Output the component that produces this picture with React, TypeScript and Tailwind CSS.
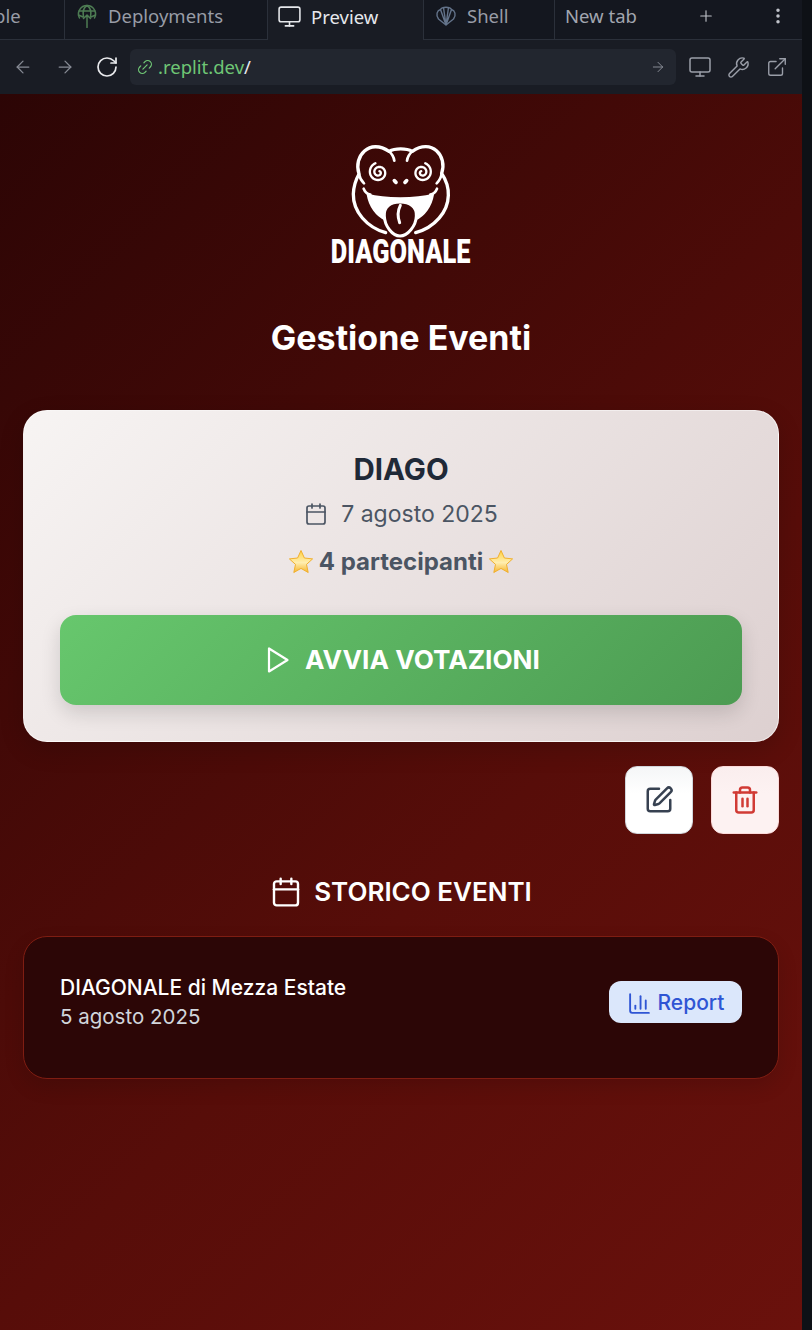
import React from "react";
import { ArrowLeft, ArrowRight, RotateCw, Link2, Monitor, Wrench, ExternalLink, Plus, EllipsisVertical, Calendar, SquarePen, Trash2, ChartColumn } from "lucide-react";

function spiral(cx: number, cy: number, dir: number) {
  const pts: string[] = [];
  for (let i = 0; i <= 60; i++) {
    const t = i / 60;
    const a = -Math.PI / 2 + dir * (0.6 + t * 1.85 * 2 * Math.PI);
    const r = 4 + t * 25;
    pts.push(`${(cx + r * Math.cos(a)).toFixed(1)} ${(cy + r * Math.sin(a)).toFixed(1)}`);
  }
  return "M" + pts.join(" L");
}

function Globe() {
  return (
    <svg width="20" height="24" viewBox="0 0 20 24" fill="none" stroke="#4d7c53" strokeWidth="1.5" strokeLinecap="round">
      <path d="M2.500 14 A8.500 8.500 0 1 1 17.500 14" />
      <path d="M10 1.500 C6 4 5.500 8 6.500 13 M10 1.500 C14 4 14.500 8 13.500 13 M2 7 H18 M1.500 11 L6 13 M18.500 11 L14 13" />
      <path d="M10 23.500 V11 M6.500 14.500 L10 11 L13.500 14.500" />
    </svg>
  );
}

function ShellIcon() {
  return (
    <svg width="22" height="22" viewBox="0 0 22 22" fill="none" stroke="#64748b" strokeWidth="1.4" strokeLinejoin="round">
      <path d="M11 20 L3.500 14 C0.500 10 2 5.500 5.500 4.500 C7 1.500 15 1.500 16.500 4.500 C20 5.500 21.500 10 18.500 14 Z" />
      <path d="M11 20 L5.500 4.500 M11 20 L8.500 2.500 M11 20 L13.500 2.500 M11 20 L16.500 4.500" />
    </svg>
  );
}

function Frog() {
  return (
    <svg width="110" height="100" viewBox="3 0 330 300" fill="none" stroke="#fff" strokeWidth="10" strokeLinecap="round" strokeLinejoin="round">
      <path d="M122 278 C66 262 24 215 25 162 C26 138 33 118 42 102 C24 48 74 -6 132 34 C150 24 184 24 202 34 C260 -6 308 48 290 100 C302 118 311 140 310 166 C309 215 270 262 212 278" />
      <path d="M132 34 C140 41 146 50 148 62 M202 34 C194 41 188 50 186 62 M42 102 C44 114 49 122 57 130 M290 100 C288 114 283 122 275 130" strokeWidth="8" />
      <path d={spiral(101, 97, 1)} strokeWidth="7" />
      <path d={spiral(231, 97, -1)} strokeWidth="7" />
      <path d="M148 122 L153 127 M185 122 L180 127" strokeWidth="11" />
      <path d="M56 146 C60 156 66 162 76 164 M276 146 C272 156 266 162 256 164" strokeWidth="8" />
      <path d="M68 164 C120 178 212 178 264 164 C258 200 236 228 212 238 L120 238 C96 228 74 200 68 164 Z" fill="#fff" stroke="#fff" strokeWidth="6" />
      <path d="M118 228 C116 200 136 186 165 186 C194 186 216 200 214 228 C213 258 188 288 165 288 C142 288 119 258 118 228 Z" fill="#3b0807" stroke="#fff" strokeWidth="9" />
      <path d="M166 196 C158 212 158 232 164 248" strokeWidth="9" />
    </svg>
  );
}

function Star() {
  return (
    <svg width="26" height="26" viewBox="0 0 26 26">
      <defs>
        <linearGradient id="starFill" x1="0" y1="0" x2="0" y2="1">
          <stop offset="0" stopColor="#ffd23f" />
          <stop offset="0.55" stopColor="#ffeeb0" />
          <stop offset="1" stopColor="#f6b52e" />
        </linearGradient>
      </defs>
      <path d="M13 1.500 L16.400 9 L24.600 9.900 L18.500 15.400 L20.200 23.500 L13 19.400 L5.800 23.500 L7.500 15.400 L1.400 9.900 L9.600 9 Z" fill="url(#starFill)" stroke="#f1b02e" strokeWidth="1" strokeLinejoin="round" />
    </svg>
  );
}

function PlayIcon() {
  return (
    <svg width="24" height="28" viewBox="0 0 24 28" fill="none" stroke="#fff" strokeWidth="2.200" strokeLinejoin="round">
      <path d="M3 2.500 V25.500 L21.500 14 Z" />
    </svg>
  );
}

function Tab({ children, active, className }: { children: React.ReactNode; active?: boolean; className: string }) {
  return (
    <div className={`flex h-[40px] shrink-0 items-center overflow-hidden border-r border-[#2b303a] pb-[7px] ${active ? "bg-[#191c24] text-[#e6e8ec]" : "border-b bg-[#14171f] text-[#989ca6]"} ${className}`}>
      {children}
    </div>
  );
}

export default function App() {
  return (
    <div className="flex h-[1330px] w-[812px] flex-col overflow-hidden bg-[#0e1116] font-['Inter',sans-serif]">
      <div className="flex h-[40px] shrink-0 font-['Noto_Sans',sans-serif] text-[18.500px]">
        <Tab className="w-[65px]"><span className="-ml-[6px]">ble</span></Tab>
        <Tab className="w-[203px] gap-[11px] pl-[12px]"><Globe /><span>Deployments</span></Tab>
        <Tab active className="w-[156px] gap-[9px] pl-[9px]"><Monitor size={25} strokeWidth={1.5} color="#e6e8ec" /><span>Preview</span></Tab>
        <Tab className="w-[131px] gap-[10px] pl-[11px]"><ShellIcon /><span>Shell</span></Tab>
        <div className="flex h-[40px] w-[247px] shrink-0 items-center border-b border-[#2b303a] bg-[#14171f] pb-[7px] pl-[10px] text-[#a2a6af]">
          <span>New tab</span>
          <Plus size={18} strokeWidth={1.5} className="ml-[60px]" color="#c0c3ca" />
          <EllipsisVertical size={20} strokeWidth={2.2} className="ml-[53px]" color="#c0c3ca" />
        </div>
        <div className="flex-1" />
      </div>
      <div className="flex h-[54px] w-[802px] shrink-0 items-center bg-[#191c24] pl-[13px]">
        <ArrowLeft size={20} strokeWidth={1.5} color="#878b95" />
        <ArrowRight size={20} strokeWidth={1.5} color="#878b95" className="ml-[22px]" />
        <RotateCw size={24} strokeWidth={1.7} color="#e8e9ec" className="ml-[20px]" />
        <div className="ml-[11px] flex h-[36px] w-[546px] items-center rounded-[6px] bg-[#22262f] pl-[6px] pr-[10px] font-['Noto_Sans',sans-serif] text-[18.500px]">
          <Link2 size={18} strokeWidth={1.6} color="#6fc675" className="-rotate-45" />
          <span className="ml-[4px] text-[#6fc675]">.replit.dev</span>
          <span className="text-[#e6e8ec]">/</span>
          <ArrowRight size={16} strokeWidth={1.4} color="#8e929c" className="ml-auto" />
        </div>
        <Monitor size={24} strokeWidth={1.5} color="#9a9ea8" className="ml-[12px]" />
        <Wrench size={23} strokeWidth={1.5} color="#9a9ea8" className="ml-[15px]" />
        <ExternalLink size={22} strokeWidth={1.5} color="#9a9ea8" className="ml-[16px]" />
      </div>

      <div className="flex h-[1236px] w-[802px] shrink-0 flex-col items-center bg-[linear-gradient(135deg,#2c0505_0%,#570d09_60%,#6a110c_100%)] px-[23px] pt-[46px]">
        <Frog />
        <div className="-mt-[1px] h-[31px] origin-top scale-x-[0.77] font-['Roboto',sans-serif] text-[33px] leading-[26px] font-black whitespace-nowrap text-white">DIAGONALE</div>
        <h1 className="mt-[46px] text-[34px] leading-[44px] font-bold text-white">Gestione Eventi</h1>

        <div className="mt-[50px] flex h-[332px] w-[756px] flex-col items-center rounded-[24px] border border-white/60 bg-[linear-gradient(135deg,#f7f4f3_0%,#ddd0d0_100%)] px-[36px] pt-[38px] shadow-[0_8px_24px_rgba(0,0,0,0.15)]">
          <h2 className="text-[29.500px] leading-[40px] font-bold text-[#1f2937]">DIAGO</h2>
          <div className="mt-[8px] flex items-center gap-[13px] text-[23px] leading-[34px] text-[#4b5563]">
            <Calendar size={24} strokeWidth={1.7} />
            <span>7 agosto 2025</span>
          </div>
          <div className="mt-[14px] flex items-center gap-[5px] text-[24px] leading-[34px] font-bold text-[#4b5563]">
            <Star />
            <span>4 partecipanti</span>
            <Star />
          </div>
          <button className="mt-[36px] flex h-[90px] w-[682px] shrink-0 items-center justify-center gap-[15px] rounded-[16px] bg-[linear-gradient(135deg,#67c76d_0%,#4c9b52_100%)] pl-[4px] text-[26.200px] font-bold text-white shadow-[0_8px_20px_rgba(0,0,0,0.14)]">
            <PlayIcon />
            AVVIA VOTAZIONI
          </button>
        </div>

        <div className="mt-[24px] flex w-full justify-end gap-[18px]">
          <button className="flex size-[68px] items-center justify-center rounded-[12px] border border-[#d1d5db] bg-[linear-gradient(180deg,#f5f6f7_0%,#ffffff_40%)]">
            <SquarePen size={30} strokeWidth={2} color="#374151" />
          </button>
          <button className="flex size-[68px] items-center justify-center rounded-[12px] border border-[#fbdada] bg-[linear-gradient(180deg,#faeeee_0%,#fdf2f2_40%)]">
            <Trash2 size={30} strokeWidth={2} color="#d13b35" />
          </button>
        </div>

        <div className="mt-[40px] flex items-center gap-[12px] text-[26px] leading-[36px] font-semibold text-white">
          <Calendar size={32} strokeWidth={1.8} />
          STORICO EVENTI
        </div>

        <div className="mt-[26px] flex h-[143px] w-[756px] items-center justify-between rounded-[24px] border border-[#7f1d12] bg-[#2c0606] px-[36px] shadow-[0_8px_20px_rgba(0,0,0,0.12)]">
          <div className="-mt-[12px] flex flex-col">
            <span className="text-[21px] leading-[29px] font-medium text-white">DIAGONALE di Mezza Estate</span>
            <span className="text-[20.500px] leading-[29px] text-[#d1d5db]">5 agosto 2025</span>
          </div>
          <button className="-mt-[11px] flex h-[42px] w-[133px] items-center justify-center gap-[6px] rounded-[12px] bg-[#dbe7fb] pt-[2px] text-[21px] font-medium text-[#2f55d4]">
            <ChartColumn size={25} strokeWidth={1.8} />
            Report
          </button>
        </div>
      </div>
    </div>
  );
}
